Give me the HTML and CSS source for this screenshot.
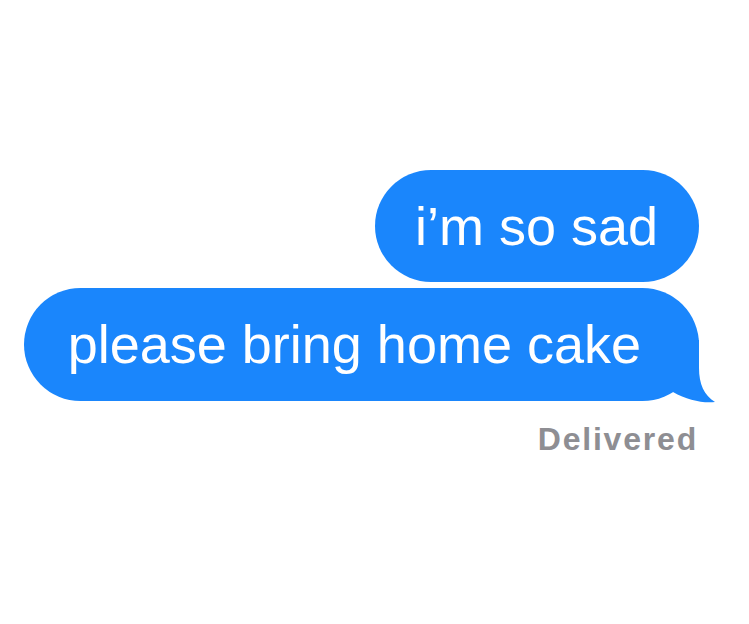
FILE: index.html
```html
<!DOCTYPE html>
<html lang="en">
<head>
<meta charset="utf-8">
<title>Messages</title>
<link rel="stylesheet" href="styles.css">
</head>
<body>
<main class="thread">
  <div class="bubble bubble-first">i’m so sad</div>
  <div class="bubble bubble-last">please bring home cake<svg class="tail" width="60" height="66" viewBox="0 0 60 66" aria-hidden="true"><path d="M40 0 L40 28 C40 44 45 55 56 62 C44 63.5 28 60 14 52 L14 0 Z" fill="#1a86fc"/></svg></div>
  <div class="status">Delivered</div>
</main>
</body>
</html>
```

FILE: styles.css
```css
html, body {
  margin: 0;
  padding: 0;
  background: #ffffff;
}

.thread {
  width: 749px;
  height: 624px;
  box-sizing: border-box;
  padding: 170px 50px 0 0;
  display: flex;
  flex-direction: column;
  align-items: flex-end;
  font-family: "Liberation Sans", Arial, sans-serif;
}

.bubble {
  position: relative;
  background: #1a86fc;
  color: #ffffff;
  font-size: 54px;
  white-space: nowrap;
}

.bubble-first {
  line-height: 112px;
  padding: 0 41px 0 40px;
  border-radius: 56px;
}

.bubble-last {
  margin-top: 6px;
  line-height: 113px;
  padding: 0 58px 0 44px;
  border-radius: 57px;
}

.tail {
  position: absolute;
  right: -20px;
  top: 52px;
  display: block;
}

.status {
  margin-top: 20px;
  margin-right: 1px;
  font-size: 32px;
  font-weight: 700;
  letter-spacing: 1.8px;
  color: #8e8e93;
}
```
